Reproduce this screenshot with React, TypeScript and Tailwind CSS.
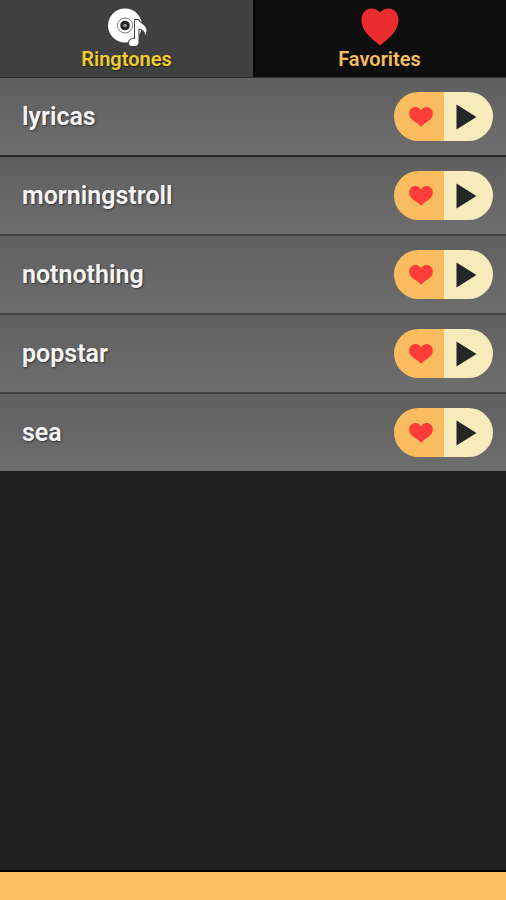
import { useState } from "react";

const ringtones = ["lyricas", "morningstroll", "notnothing", "popstar", "sea"];

function DiscIcon() {
    return (
        <svg viewBox="0 0 40 38" className="h-[38px] w-10" aria-hidden="true">
            <circle cx="18" cy="17.5" r="17" fill="#fff" />
            <circle cx="18" cy="17.5" r="7.5" fill="none" stroke="#777" strokeWidth="1" />
            <circle cx="18" cy="17.5" r="4.8" fill="#222" />
            <circle cx="18" cy="17.5" r="1.8" fill="#999" />
            <path
                d="M28 12h3.500c.6 3.800 8 4.200 8 10.500 0 1.800-.6 3.300-1.400 4.500-.2-4-2.600-6-6.600-6.500V34c0 2.700-2.300 4.700-5 4.700-2.700 0-4.700-1.500-4.700-3.700 0-2.400 2.300-4.300 4.700-4.300.5 0 1 .1 1.500.2z"
                fill="#fff"
                stroke="#404040"
                strokeWidth="2"
                strokeLinejoin="round"
                paintOrder="stroke"
            />
        </svg>
    );
}

function BigHeart() {
    return (
        <svg viewBox="0 0 38 38" className="h-[38px] w-[38px]" aria-hidden="true">
            <path
                d="M19 4.500C16.500 1.700 13.500.5 10.500.5 5 .5.5 5 .5 11.500c0 6 2.300 10.500 6 14.800 3.500 4 8 7.700 12.500 11.200 4.500-3.500 9-7.200 12.500-11.200 3.700-4.300 6-8.800 6-14.800C37.500 5 33 .5 27.500.5 24.500.5 21.500 1.700 19 4.500z"
                fill="#ea2c2e"
            />
        </svg>
    );
}

function SmallHeart() {
    return (
        <svg viewBox="0 0 24 20" className="h-5 w-6" aria-hidden="true">
            <path
                d="M12 3.500C10.900 1.300 9 .1 6.600.1 3 .1.2 2.700.2 6.400c0 3.800 2.400 6 5.200 8 2.600 1.800 5.100 3.200 6.600 5.600 1.500-2.400 4-3.800 6.600-5.600 2.800-2 5.200-4.200 5.200-8 0-3.700-2.800-6.300-6.400-6.300-2.400 0-4.300 1.200-5.400 3.400z"
                fill="#fc3d39"
            />
        </svg>
    );
}

function PlayIcon() {
    return (
        <svg viewBox="0 0 21 26" className="h-[26px] w-[21px]" aria-hidden="true">
            <path d="M.5.5v25L20.500 13z" fill="#252628" />
        </svg>
    );
}

function Row({ name }: { name: string }) {
    return (
        <li className="flex items-center justify-between border-b-2 border-[#424242] bg-linear-to-b from-[#5f5f5f] to-[#6e6e6e] py-3.5 pr-[13px] pl-[22px] first:border-[#262626] last:border-b-0">
            <span className="pt-px text-[25px] leading-8 font-semibold text-[#f5f5f5] [text-shadow:1px_1px_2px_#333]">{name}</span>
            <div className="flex h-[49px] w-[99px] overflow-hidden rounded-full">
                <button
                    type="button"
                    aria-label={`Add ${name} to favorites`}
                    className="flex w-1/2 items-center justify-center bg-[#f9bd5f] pl-1"
                >
                    <SmallHeart />
                </button>
                <button
                    type="button"
                    aria-label={`Play ${name}`}
                    className="flex w-1/2 items-center justify-center bg-[#f8ebbb] pr-1"
                >
                    <PlayIcon />
                </button>
            </div>
        </li>
    );
}

export default function App() {
    const [tab, setTab] = useState("ringtones");

    return (
        <div className="flex min-h-screen flex-col bg-[#1f1f1f] font-['Roboto',sans-serif]">
            <nav className="flex h-[78px] border-b border-[#303030]">
                <button
                    type="button"
                    aria-pressed={tab === "ringtones"}
                    onClick={() => setTab("ringtones")}
                    className="flex flex-1 flex-col items-center bg-[#404040] pt-2 text-xl leading-[26px] font-semibold text-[#f0cc2f] [text-shadow:1px_1px_2px_#222]"
                >
                    <DiscIcon />
                    Ringtones
                </button>
                <button
                    type="button"
                    aria-pressed={tab === "favorites"}
                    onClick={() => setTab("favorites")}
                    className="flex flex-1 flex-col items-center bg-[#0e0e0e] pt-2 text-xl leading-[26px] font-semibold text-[#f5bd62] shadow-[inset_2px_0_0_#000]"
                >
                    <BigHeart />
                    Favorites
                </button>
            </nav>
            <ul>
                {ringtones.map((name) => (
                    <Row key={name} name={name} />
                ))}
            </ul>
            <footer className="mt-auto h-[30px] border-t-2 border-black bg-[#f9bf60]" />
        </div>
    );
}
